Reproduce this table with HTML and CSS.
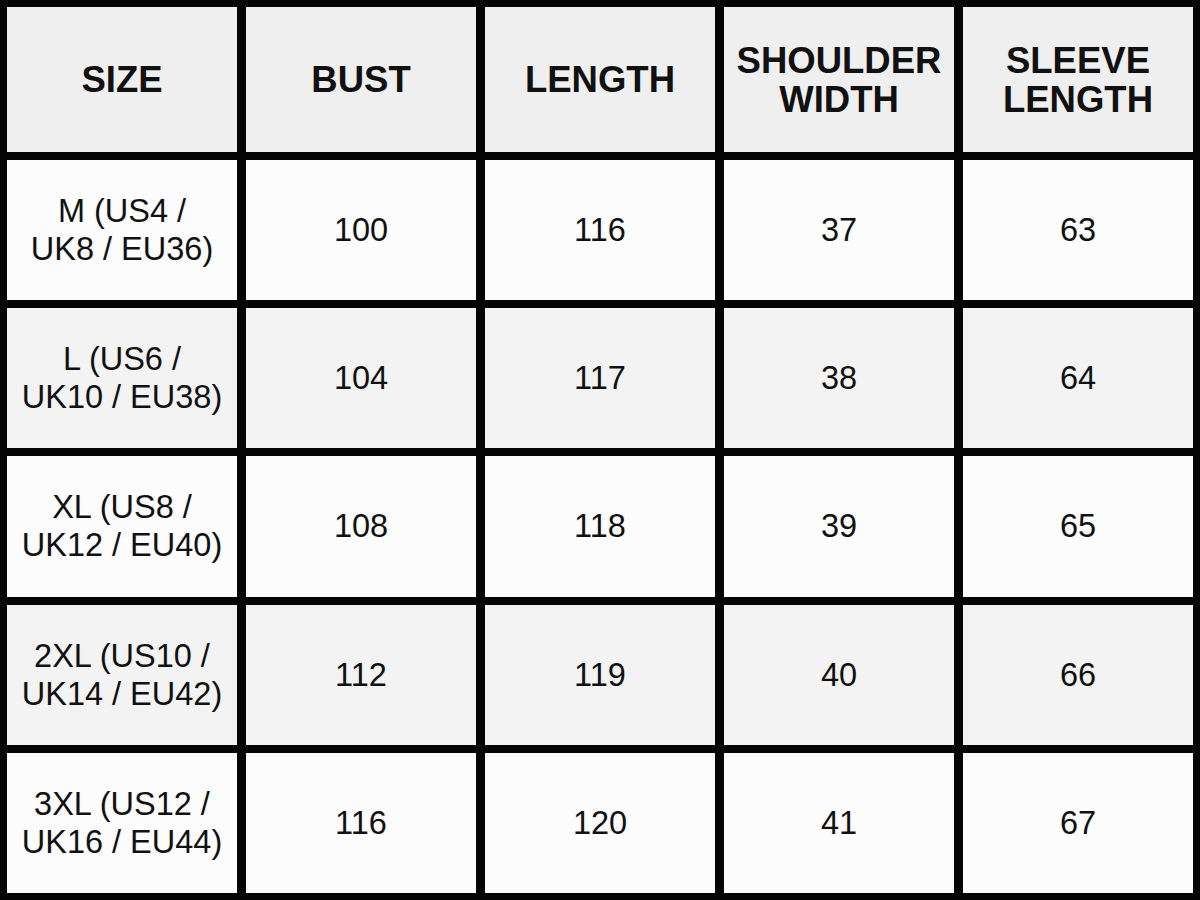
FILE: index.html
```html
<!DOCTYPE html>
<html>
<head>
<meta charset="utf-8">
<link rel="stylesheet" href="styles.css">
</head>
<body>
<div class="table">
  <div class="cell head">SIZE</div>
  <div class="cell head">BUST</div>
  <div class="cell head">LENGTH</div>
  <div class="cell head">SHOULDER<br>WIDTH</div>
  <div class="cell head">SLEEVE<br>LENGTH</div>

  <div class="cell">M (US4 /<br>UK8 / EU36)</div>
  <div class="cell">100</div>
  <div class="cell">116</div>
  <div class="cell">37</div>
  <div class="cell">63</div>

  <div class="cell alt">L (US6 /<br>UK10 / EU38)</div>
  <div class="cell alt">104</div>
  <div class="cell alt">117</div>
  <div class="cell alt">38</div>
  <div class="cell alt">64</div>

  <div class="cell">XL (US8 /<br>UK12 / EU40)</div>
  <div class="cell">108</div>
  <div class="cell">118</div>
  <div class="cell">39</div>
  <div class="cell">65</div>

  <div class="cell alt">2XL (US10 /<br>UK14 / EU42)</div>
  <div class="cell alt">112</div>
  <div class="cell alt">119</div>
  <div class="cell alt">40</div>
  <div class="cell alt">66</div>

  <div class="cell">3XL (US12 /<br>UK16 / EU44)</div>
  <div class="cell">116</div>
  <div class="cell">120</div>
  <div class="cell">41</div>
  <div class="cell">67</div>
</div>
</body>
</html>
```

FILE: styles.css
```css
html, body {
  margin: 0;
  padding: 0;
  background: #000;
}
.table {
  box-sizing: border-box;
  width: 1200px;
  height: 900px;
  padding: 7px;
  background: #050505;
  display: grid;
  grid-template-columns: repeat(5, 1fr);
  grid-template-rows: 145px repeat(5, 1fr);
  column-gap: 9px;
  row-gap: 8px;
  font-family: "Liberation Sans", Arial, sans-serif;
  color: #111;
}
.cell {
  display: flex;
  align-items: center;
  justify-content: center;
  text-align: center;
  background: #fcfcfc;
  font-size: 32.5px;
  line-height: 38px;
}
.cell.alt {
  background: #f3f3f3;
}
.cell.head {
  background: #efefef;
  font-weight: bold;
  font-size: 36.5px;
  line-height: 39px;
}
```
